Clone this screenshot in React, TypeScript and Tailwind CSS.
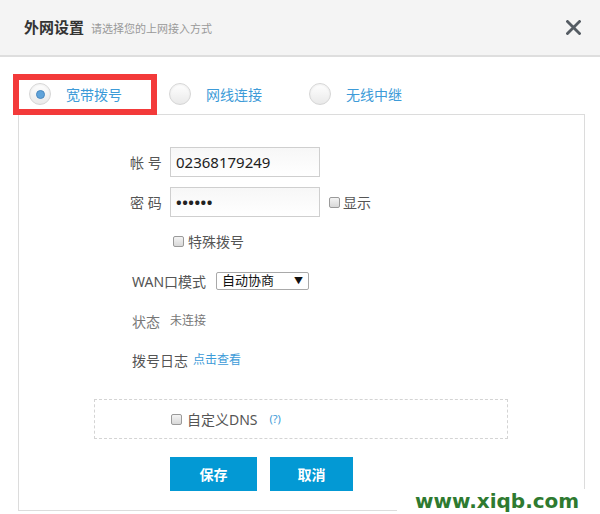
import React from "react";

const FONT = { fontFamily: '"Noto Sans", "Noto Sans CJK SC", sans-serif' };

function Radio({ checked }: { checked?: boolean }) {
  return (
    <span className="flex h-[22px] w-[22px] shrink-0 items-center justify-center rounded-full border border-[#d6d6d6] bg-gradient-to-b from-[#ffffff] to-[#e9e9e9] shadow-[inset_0_1px_2px_rgba(0,0,0,0.06)]">
      {checked && (
        <span className="h-[9px] w-[9px] rounded-full border border-[#4a88bf] bg-[#5fa3da]" />
      )}
    </span>
  );
}

function Check() {
  return (
    <span className="inline-block h-[11px] w-[11px] shrink-0 rounded-[2px] border border-[#9a9a9a] bg-gradient-to-b from-[#f4f4f4] to-[#d8d8d8]" />
  );
}

export default function App() {
  return (
    <div className="relative h-[514px] w-[600px] overflow-hidden bg-white" style={FONT}>
      {/* header */}
      <div className="flex h-[57px] items-center justify-between border-b-2 border-[#dedede] bg-[#f4f4f4] pl-[24px] pr-[19px]">
        <div className="flex items-baseline">
          <span className="text-[15px] font-bold text-[#333]">外网设置</span>
          <span className="ml-[7px] text-[11px] text-[#999]">请选择您的上网接入方式</span>
        </div>
        <svg width="15" height="15" viewBox="0 0 15 15">
          <path d="M1.5 1.5 L13.5 13.5 M13.5 1.5 L1.5 13.5" stroke="#555c63" strokeWidth="2.8" strokeLinecap="square" />
        </svg>
      </div>

      {/* tabs */}
      <div className="relative mt-[17px] flex h-[40px] items-center pl-[29px] text-[14px] text-[#3d9bd8]">
        <Radio checked />
        <span className="ml-[15px]">宽带拨号</span>
        <span className="ml-[47px]">
          <Radio />
        </span>
        <span className="ml-[15px]">网线连接</span>
        <span className="ml-[47px]">
          <Radio />
        </span>
        <span className="ml-[15px]">无线中继</span>
        <div className="pointer-events-none absolute left-[13px] top-0 z-10 h-[41px] w-[144px] border-[6px] border-[#f33a3a]" />
      </div>

      {/* panel */}
      <div className="ml-[18px] flex h-[397px] w-[567px] flex-col border border-[#dcdcdc] pt-[32px] text-[14px] text-[#555]">
        <div className="ml-[111px] flex items-center">
          <span className="w-[40px]">帐 号</span>
          <div className="flex h-[30px] w-[150px] items-center border border-[#cfcfcf] bg-gradient-to-b from-[#f7f7f7] to-white pl-[5px] text-[15px] text-[#222]">
            02368179249
          </div>
        </div>
        <div className="ml-[111px] mt-[10px] flex items-center">
          <span className="w-[40px]">密 码</span>
          <div className="flex h-[30px] w-[150px] items-center border border-[#cfcfcf] bg-gradient-to-b from-[#f7f7f7] to-white pl-[5px] text-[15px] font-bold tracking-[0.5px] text-[#222]">
            ••••••
          </div>
          <span className="ml-[9px] flex items-center">
            <Check />
          </span>
          <span className="ml-[3px]">显示</span>
        </div>
        <div className="ml-[154px] mt-[14px] flex h-[20px] items-center">
          <Check />
          <span className="ml-[4px]">特殊拨号</span>
        </div>
        <div className="ml-[113px] mt-[20px] flex h-[20px] items-center">
          <span className="w-[84px]">WAN口模式</span>
          <div className="flex h-[18px] w-[93px] items-center justify-between rounded-[2px] border border-[#a9a9a9] pl-[5px] pr-[5px] text-[13px] text-[#111]">
            <span>自动协商</span>
            <span className="text-[9px]">▼</span>
          </div>
        </div>
        <div className="ml-[113px] mt-[20px] flex h-[20px] items-center text-[#777]">
          <span className="w-[38px]">状态</span>
          <span className="text-[12px]">未连接</span>
        </div>
        <div className="ml-[113px] mt-[19px] flex h-[20px] items-center">
          <span className="w-[61px]">拨号日志</span>
          <span className="text-[12px] text-[#3d9bd8]">点击查看</span>
        </div>
        <div className="ml-[75px] mt-[29px] flex h-[40px] w-[414px] items-center border border-dashed border-[#d4d4d4] pl-[76px]">
          <Check />
          <span className="ml-[5px]">自定义DNS</span>
          <span className="ml-[12px] text-[11px] text-[#3d9bd8]">(?)</span>
        </div>
        <div className="ml-[151px] mt-[18px] flex">
          <button className="h-[34px] w-[87px] bg-[#0399d4] text-[14px] font-bold text-white">保存</button>
          <button className="ml-[13px] h-[34px] w-[83px] bg-[#0399d4] text-[14px] font-bold text-white">取消</button>
        </div>
      </div>

      {/* watermark */}
      <div
        className="absolute left-[397px] top-[489px] h-[25px] w-[203px] bg-white pl-[18px] pt-[2px] text-[20px] font-bold leading-[20px] text-[#2e7a30]"
        style={{ fontFamily: '"DejaVu Sans", sans-serif' }}
      >
        www.xiqb.com
      </div>
    </div>
  );
}
